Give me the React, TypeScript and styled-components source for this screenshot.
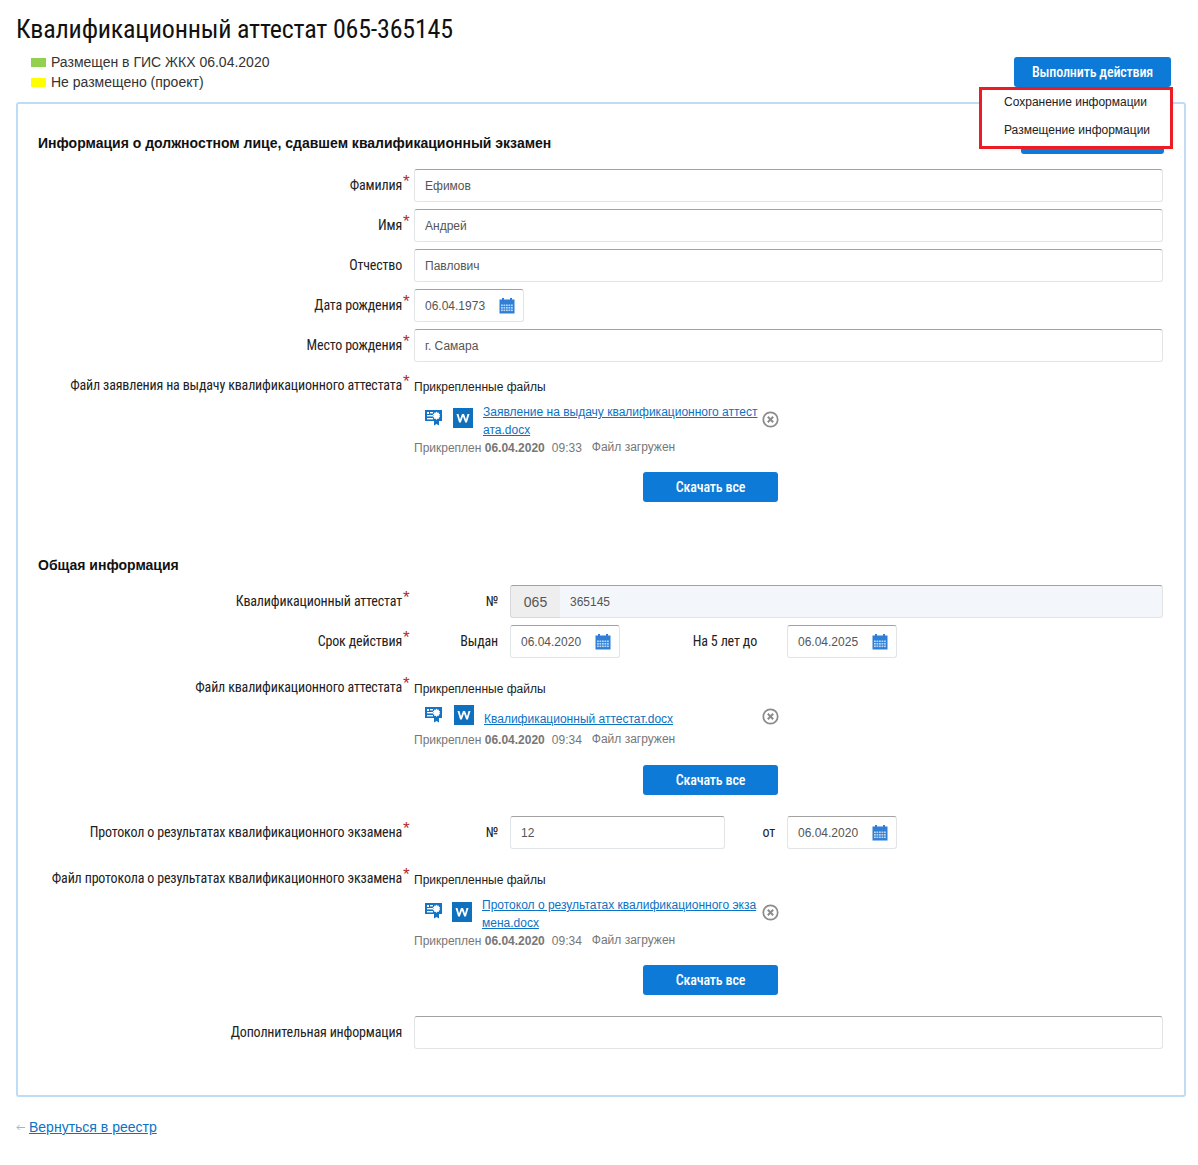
import React from "react";
import styled, { createGlobalStyle } from "styled-components";

const Global = createGlobalStyle`
  html, body { margin: 0; padding: 0; background: #fff; }
  body { font-family: "Liberation Sans", Arial, sans-serif; color: #111; }
`;

const Page = styled.div`
  position: relative;
  width: 1198px;
  height: 1165px;
  box-sizing: border-box;
  padding: 14px 12px 0 16px;
`;
const Title = styled.h1`
  margin: 0;
  font: 400 26px/30px Roboto, sans-serif;
  font-stretch: 75%;
  letter-spacing: -0.2px;
  color: #111;
  white-space: nowrap;
`;
const Header = styled.div`
  display: flex;
  justify-content: space-between;
  padding: 8px 15px 0 15px;
  height: 58px;
  box-sizing: border-box;
`;
const Legend = styled.div`
  display: flex;
  flex-direction: column;
`;
const LegendItem = styled.div`
  display: flex;
  align-items: center;
  gap: 5px;
  height: 20px;
  font: 400 14px/20px "Liberation Sans", sans-serif;
  color: #333;
`;
const Swatch = styled.span<{ $color: string }>`
  width: 15px;
  height: 9px;
  background: ${(p) => p.$color};
`;
const Actions = styled.div`
  position: relative;
  padding-top: 5px;
`;
const BlueButton = styled.button<{ $width: number }>`
  display: block;
  width: ${(p) => p.$width}px;
  height: 30px;
  padding: 0;
  border: 0;
  border-radius: 3px;
  background: #0c7ad6;
  color: #fff;
  font: 500 14px/30px Roboto, sans-serif;
  font-stretch: 75%;
  letter-spacing: -0.16px;
`;
const Menu = styled.div`
  position: absolute;
  z-index: 2;
  left: -35px;
  top: 35px;
  width: 194px;
  height: 62px;
  box-sizing: border-box;
  border: 3px solid #ed1c24;
  background: #fff;
  padding: 0 0 0 22px;
`;
const MenuItem = styled.div`
  position: relative;
  top: -2px;
  font: 400 12px/28px "Liberation Sans", sans-serif;
  color: #222;
  white-space: nowrap;
`;
const Panel = styled.section`
  width: 1170px;
  height: 995px;
  box-sizing: border-box;
  border: 2px solid #bfdcf5;
  border-radius: 3px;
  padding: 20px 21px 0 20px;
`;
const SectionHead = styled.div`
  display: flex;
  justify-content: space-between;
  align-items: flex-end;
  height: 30px;
  margin: 0 -1px 15px 0;
`;
const SectionTitle = styled.h2<{ $mb: number }>`
  margin: 0 0 ${(p) => p.$mb}px;
  font: 700 14px/18px "Liberation Sans", sans-serif;
  color: #111;
`;
const Row = styled.div<{ $mb?: number; $start?: boolean }>`
  display: grid;
  grid-template-columns: 371px 1fr;
  column-gap: 5px;
  min-height: 33px;
  margin-bottom: ${(p) => p.$mb ?? 7}px;
  align-items: ${(p) => (p.$start ? "start" : "center")};
`;
const Label = styled.label`
  display: flex;
  justify-content: flex-end;
  margin-bottom: 2px;
  font: 400 14px/16px Roboto, sans-serif;
  font-stretch: 75%;
  letter-spacing: -0.16px;
  color: #222;
  white-space: nowrap;
`;
const Star = styled.span`
  display: inline-block;
  width: 7px;
  margin-top: -3px;
  padding-left: 1px;
  box-sizing: border-box;
  color: #b02a2a;
  font: 400 17px/16px "Liberation Sans", sans-serif;
  letter-spacing: 0;
`;
const Input = styled.div<{ $width?: number; $grey?: boolean }>`
  box-sizing: border-box;
  height: 33px;
  width: ${(p) => (p.$width ? `${p.$width}px` : "100%")};
  flex: ${(p) => (p.$width ? "none" : "1")};
  display: flex;
  align-items: center;
  justify-content: space-between;
  padding: 1px 8px 0 10px;
  border: 1px solid #e2e5e8;
  border-top-color: #a2a2a2;
  border-radius: 3px;
  background: ${(p) => (p.$grey ? "#f3f6fa" : "#fff")};
  font: 400 12px/16px "Liberation Sans", sans-serif;
  color: #555;
`;
const FieldLine = styled.div`
  display: flex;
  align-items: center;
  ${Input} {
    padding-top: 0;
  }
`;
const SubLabel = styled.span<{ $width: number; $gap?: number }>`
  flex: none;
  width: ${(p) => p.$width}px;
  margin-right: ${(p) => p.$gap ?? 12}px;
  padding-bottom: 2px;
  text-align: right;
  font: 400 14px/16px Roboto, sans-serif;
  font-stretch: 75%;
  letter-spacing: -0.16px;
  color: #222;
  white-space: nowrap;
`;
const Prefix = styled.div`
  flex: none;
  box-sizing: border-box;
  width: 50px;
  height: 33px;
  display: flex;
  align-items: center;
  justify-content: center;
  border: 1px solid #d6d8da;
  border-top-color: #a2a2a2;
  border-right: 0;
  border-radius: 3px 0 0 3px;
  background: #eee;
  font: 400 14px/16px "Liberation Sans", sans-serif;
  color: #555;
`;
const GroupInput = styled(Input)`
  border-radius: 0 3px 3px 0;
  border-left: 0;
`;
const Files = styled.div`
  width: 364px;
  padding-top: 2px;
`;
const FilesTitle = styled.div`
  font: 400 12px/16px "Liberation Sans", sans-serif;
  color: #222;
`;
const FileItem = styled.div<{ $top: number; $height: number }>`
  position: relative;
  display: flex;
  align-items: flex-start;
  margin-top: ${(p) => p.$top}px;
  height: ${(p) => p.$height}px;
  padding-left: 11px;
`;
const IconSlot = styled.span<{ $gap: number; $top?: number }>`
  flex: none;
  display: block;
  margin-right: ${(p) => p.$gap}px;
  margin-top: ${(p) => p.$top ?? 0}px;
  line-height: 0;
`;
const FileLink = styled.a<{ $top: number }>`
  display: block;
  width: 276px;
  margin-top: ${(p) => p.$top}px;
  font: 400 12px/18px "Liberation Sans", sans-serif;
  color: #0c72c4;
  text-decoration: underline;
  word-break: break-all;
`;
const RemoveSlot = styled.span<{ $top: number }>`
  position: absolute;
  left: 348px;
  top: ${(p) => p.$top}px;
  line-height: 0;
`;
const Meta = styled.div`
  display: flex;
  font: 400 12px/16px "Liberation Sans", sans-serif;
  color: #777;
`;
const MetaDate = styled.b`
  font-weight: 700;
  margin: 0 7px 0 0;
`;
const MetaTime = styled.span`
  width: 40px;
  flex: none;
`;
const MetaStatus = styled.span`
  margin-top: -1px;
`;
const DownloadRow = styled.div<{ $top: number }>`
  display: flex;
  justify-content: flex-end;
  margin-top: ${(p) => p.$top}px;
`;
const Back = styled.div`
  margin-top: 21px;
  display: flex;
  align-items: center;
  gap: 3px;
  font: 400 14px/18px "Liberation Sans", sans-serif;
`;
const BackArrow = styled.span`
  width: 10px;
  line-height: 0;
`;
const BackLink = styled.a`
  color: #0c72c4;
  text-decoration: underline;
`;

const CalendarIcon = () => (
  <svg width="16" height="16" viewBox="0 0 16 16">
    <rect x="0.5" y="1.5" width="15" height="14" fill="#2f7fd6" />
    <rect x="3" y="0" width="2" height="3" fill="#2f7fd6" />
    <rect x="11" y="0" width="2" height="3" fill="#2f7fd6" />
    <g fill="#bcd6f2">
      {[6.5, 9, 11.5].map((y) =>
        [2, 4.5, 7, 9.5, 12].map((x) => <rect key={`${x}-${y}`} x={x} y={y} width="1.8" height="1.6" />)
      )}
    </g>
  </svg>
);
const CertIcon = () => (
  <svg width="17" height="17" viewBox="0 0 17 17">
    <rect x="0" y="1" width="17" height="11" fill="#1273c7" />
    <path d="M9 10l0 6.5 2.5-1.5 2.5 1.5 0-6.5z" fill="#1273c7" />
    <rect x="2" y="3" width="2" height="2" fill="#fff" />
    <rect x="5" y="3" width="3" height="1.4" fill="#fff" />
    <rect x="2" y="6" width="6" height="1.4" fill="#fff" />
    <rect x="2" y="9" width="6" height="1.4" fill="#fff" />
    <path d="M11.5 2.5l.8 1.2 1.4-.3.2 1.4 1.3.7-.8 1.2.8 1.2-1.3.7-.2 1.4-1.4-.3-.8 1.2-.8-1.2-1.4.3-.2-1.4-1.3-.7.8-1.2-.8-1.2 1.3-.7.2-1.4 1.4.3z" fill="#fff" />
  </svg>
);
const WordIcon = () => (
  <svg width="20" height="20" viewBox="0 0 20 20">
    <rect width="20" height="20" fill="#0f70bd" />
    <path d="M3.5 6l2.6 8.5h1.7L10 8.6l2.2 5.9h1.7L16.5 6h-2l-1.5 5.6L11 6H9L7 11.6 5.5 6z" fill="#fff" />
  </svg>
);
const RemoveIcon = () => (
  <svg width="17" height="17" viewBox="0 0 17 17">
    <circle cx="8.5" cy="8.5" r="7.2" fill="#fff" stroke="#8b8b8b" strokeWidth="1.7" />
    <path d="M5.8 5.8l5.4 5.4M11.2 5.8l-5.4 5.4" stroke="#8b8b8b" strokeWidth="2" />
  </svg>
);
const ArrowIcon = () => (
  <svg width="9" height="7" viewBox="0 0 9 7">
    <path d="M9 3.5H1M3.5 1L1 3.5 3.5 6" fill="none" stroke="#9bb8cf" strokeWidth="1" />
  </svg>
);

const Req = () => <Star>*</Star>;
const NoReq = () => <Star />;

const DateField = ({ value }: { value: string }) => (
  <Input $width={110}>
    {value}
    <CalendarIcon />
  </Input>
);

type FileProps = {
  itemTop: number;
  itemHeight: number;
  gapA: number;
  certTop: number;
  linkTop: number;
  removeTop: number;
  buttonTop: number;
  name: string;
  time: string;
};
const FileBlock = (f: FileProps) => (
  <Files>
    <FilesTitle>Прикрепленные файлы</FilesTitle>
    <FileItem $top={f.itemTop} $height={f.itemHeight}>
      <IconSlot $gap={f.gapA} $top={f.certTop}>
        <CertIcon />
      </IconSlot>
      <IconSlot $gap={10}>
        <WordIcon />
      </IconSlot>
      <FileLink href="#" $top={f.linkTop}>
        {f.name}
      </FileLink>
      <RemoveSlot $top={f.removeTop}>
        <RemoveIcon />
      </RemoveSlot>
    </FileItem>
    <Meta>
      Прикреплен&nbsp;
      <MetaDate>06.04.2020</MetaDate>
      <MetaTime>{f.time}</MetaTime>
      <MetaStatus>Файл загружен</MetaStatus>
    </Meta>
    <DownloadRow $top={f.buttonTop}>
      <BlueButton $width={135}>Скачать все</BlueButton>
    </DownloadRow>
  </Files>
);

export default function App() {
  return (
    <Page>
      <Global />
      <Title>Квалификационный аттестат 065-365145</Title>
      <Header>
        <Legend>
          <LegendItem>
            <Swatch $color="#92d050" />
            Размещен в ГИС ЖКХ 06.04.2020
          </LegendItem>
          <LegendItem>
            <Swatch $color="#ffff00" />
            Не размещено (проект)
          </LegendItem>
        </Legend>
        <Actions>
          <BlueButton $width={157}>Выполнить действия</BlueButton>
          <Menu>
            <MenuItem>Сохранение информации</MenuItem>
            <MenuItem>Размещение информации</MenuItem>
          </Menu>
        </Actions>
      </Header>
      <Panel>
        <SectionHead>
          <SectionTitle $mb={2}>Информация о должностном лице, сдавшем квалификационный экзамен</SectionTitle>
          <BlueButton $width={143} />
        </SectionHead>
        <Row>
          <Label>Фамилия<Req /></Label>
          <Input>Ефимов</Input>
        </Row>
        <Row>
          <Label>Имя<Req /></Label>
          <Input>Андрей</Input>
        </Row>
        <Row>
          <Label>Отчество<NoReq /></Label>
          <Input>Павлович</Input>
        </Row>
        <Row>
          <Label>Дата рождения<Req /></Label>
          <DateField value="06.04.1973" />
        </Row>
        <Row $mb={15}>
          <Label>Место рождения<Req /></Label>
          <Input>г. Самара</Input>
        </Row>
        <Row $start $mb={54}>
          <Label>Файл заявления на выдачу квалификационного аттестата<Req /></Label>
          <FileBlock
            itemTop={13}
            itemHeight={32}
            gapA={11}
            certTop={1}
            linkTop={-5}
            removeTop={3}
            buttonTop={16}
            name="Заявление на выдачу квалификационного аттестата.docx"
            time="09:33"
          />
        </Row>
        <SectionTitle $mb={11}>Общая информация</SectionTitle>
        <Row>
          <Label>Квалификационный аттестат<Req /></Label>
          <FieldLine>
            <SubLabel $width={84}>№</SubLabel>
            <Prefix>065</Prefix>
            <GroupInput $grey>365145</GroupInput>
          </FieldLine>
        </Row>
        <Row $mb={21}>
          <Label>Срок действия<Req /></Label>
          <FieldLine>
            <SubLabel $width={84}>Выдан</SubLabel>
            <DateField value="06.04.2020" />
            <SubLabel $width={137} $gap={30}>На 5 лет до</SubLabel>
            <DateField value="06.04.2025" />
          </FieldLine>
        </Row>
        <Row $start $mb={21}>
          <Label>Файл квалификационного аттестата<Req /></Label>
          <FileBlock
            itemTop={8}
            itemHeight={27}
            gapA={12}
            certTop={1}
            linkTop={5}
            removeTop={3}
            buttonTop={17}
            name="Квалификационный аттестат.docx"
            time="09:34"
          />
        </Row>
        <Row $mb={21}>
          <Label>Протокол о результатах квалификационного экзамена<Req /></Label>
          <FieldLine>
            <SubLabel $width={84}>№</SubLabel>
            <Input $width={215}>12</Input>
            <SubLabel $width={50}>от</SubLabel>
            <DateField value="06.04.2020" />
          </FieldLine>
        </Row>
        <Row $start $mb={21}>
          <Label>Файл протокола о результатах квалификационного экзамена<Req /></Label>
          <FileBlock
            itemTop={14}
            itemHeight={31}
            gapA={10}
            certTop={0}
            linkTop={-6}
            removeTop={2}
            buttonTop={16}
            name="Протокол о результатах квалификационного экзамена.docx"
            time="09:34"
          />
        </Row>
        <Row>
          <Label>Дополнительная информация<NoReq /></Label>
          <Input />
        </Row>
      </Panel>
      <Back>
        <BackArrow><ArrowIcon /></BackArrow>
        <BackLink href="#">Вернуться в реестр</BackLink>
      </Back>
    </Page>
  );
}
